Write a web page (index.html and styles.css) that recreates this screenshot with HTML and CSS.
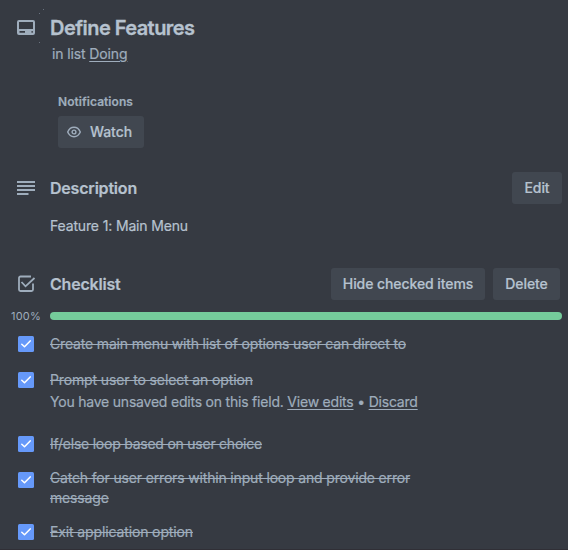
FILE: index.html
```html
<!DOCTYPE html>
<html lang="en">
<head>
<meta charset="utf-8">
<title>Define Features</title>
<link rel="stylesheet" href="styles.css">
</head>
<body>
<main class="card">
  <header class="row card-head">
    <svg class="icon" viewBox="0 0 24 24" fill="currentColor"><path fill-rule="evenodd" d="M5 4h14a2 2 0 0 1 2 2v11a2 2 0 0 1-2 2H5a2 2 0 0 1-2-2V6a2 2 0 0 1 2-2zM5 6v7h14V6zM5.500 15v1.800H11V15zM17.500 15v1.800h1.300V15z"/></svg>
    <h1>Define Features</h1>
  </header>
  <p class="in-list">in list <a>Doing</a></p>
  <section class="notifications">
    <h3>Notifications</h3>
    <button class="btn watch">
      <svg viewBox="0 0 16 16" fill="none" stroke="currentColor" stroke-width="1.400"><path d="M1.700 8C3 4.800 5.300 3.300 8 3.300S13 4.800 14.300 8C13 11.200 10.700 12.700 8 12.700S3 11.200 1.700 8z"/><circle cx="8" cy="8" r="1.900"/></svg>
      <span>Watch</span>
    </button>
  </section>
  <section>
    <div class="row section-head">
      <svg class="icon" viewBox="0 0 24 24" fill="none" stroke="currentColor" stroke-width="1.900"><path d="M3 6h18M3 10h18M3 14h18M3 18h11.500"/></svg>
      <h2>Description</h2>
      <button class="btn edit">Edit</button>
    </div>
    <p class="description">Feature 1: Main Menu</p>
  </section>
  <section>
    <div class="row section-head checklist-head">
      <svg class="icon" viewBox="0 0 24 24" fill="none" stroke="currentColor" stroke-width="1.800"><path d="M17 4.500H6.500a1.500 1.500 0 0 0-1.500 1.500v11.500a1.500 1.500 0 0 0 1.500 1.500H17.500a1.500 1.500 0 0 0 1.500-1.500v-6M7.500 10l4 4.300L20.500 6"/></svg>
      <h2>Checklist</h2>
      <button class="btn hide">Hide checked items</button>
      <button class="btn delete">Delete</button>
    </div>
    <div class="progress"><span class="percent">100%</span><div class="track"></div></div>
    <ul class="items">
      <li><svg class="check" viewBox="0 0 16 16"><path d="M3.800 8.200l2.700 2.600 5.700-5.900"/></svg><s>Create main menu with list of options user can direct to</s></li>
      <li class="edited"><svg class="check" viewBox="0 0 16 16"><path d="M3.800 8.200l2.700 2.600 5.700-5.900"/></svg><div><s class="prompt">Prompt user to select an option</s><p class="unsaved">You have unsaved edits on this field. <a>View edits</a> • <a>Discard</a></p></div></li>
      <li><svg class="check" viewBox="0 0 16 16"><path d="M3.800 8.200l2.700 2.600 5.700-5.900"/></svg><s class="loop">If/else loop based on user choice</s></li>
      <li class="long"><svg class="check" viewBox="0 0 16 16"><path d="M3.800 8.200l2.700 2.600 5.700-5.900"/></svg><s>Catch for user errors within input loop and provide error<br>message</s></li>
      <li><svg class="check" viewBox="0 0 16 16"><path d="M3.800 8.200l2.700 2.600 5.700-5.900"/></svg><s class="prompt">Exit application option</s></li>
    </ul>
  </section>
</main>
</body>
</html>
```
FILE: styles.css
```css
* { box-sizing: border-box; }
body { margin: 0; background: #363a42; color: #9fadbc; font: 14px/20px Inter, "Liberation Sans", sans-serif; overflow: hidden; -webkit-text-stroke: .2px; }
h1, h2, h3, p, ul { margin: 0; padding: 0; }
a { text-decoration: underline; text-underline-offset: 2px; }
.card {
  height: 550px; padding: 16px 6px 0 14px; border-bottom: 1px solid #302f36; overflow: hidden;
  background:
    linear-gradient(#69727f, #69727f) 43px 9px / 1px 1px no-repeat,
    linear-gradient(#69727f, #69727f) 39px 13px / 1px 1px no-repeat,
    linear-gradient(#69727f, #69727f) 39px 42px / 1px 1px no-repeat;
}
.row { display: flex; align-items: center; }
.icon { width: 24px; height: 24px; flex: none; margin-right: 12px; }
h1 { font-size: 20px; line-height: 24px; font-weight: 600; color: #b6c2cf; letter-spacing: -.55px; -webkit-text-stroke: .3px; }
.in-list { margin: 4px 0 0 38px; letter-spacing: -.13px; }
.notifications { margin: 30px 0 0 44px; }
h3 { font-size: 12px; line-height: 16px; font-weight: 600; margin-bottom: 6px; letter-spacing: .05px; }
.btn { height: 32px; border: 0; border-radius: 3px; padding: 0; background: #414750; color: #b6c2cf; font: 500 14px/20px Inter, sans-serif; letter-spacing: -.08px; display: flex; align-items: center; justify-content: center; white-space: nowrap; flex: none; }
.watch { width: 86px; padding-left: 8px; justify-content: flex-start; }
.watch svg { width: 16px; height: 16px; color: #9fadbc; margin-right: 8px; }
.section-head { height: 32px; margin-top: 24px; }
h2 { flex: 1; font-size: 16px; line-height: 20px; font-weight: 600; color: #b6c2cf; letter-spacing: -.2px; }
.edit { width: 50px; }
.description { margin: 12px 0 0 36px; color: #b6c2cf; letter-spacing: -.15px; }
.checklist-head { margin-top: 32px; padding-right: 2px; }
.hide { width: 154px; margin-right: 8px; }
.delete { width: 67px; }
.progress { display: flex; align-items: center; height: 16px; margin-top: 8px; }
.percent { width: 39px; margin-left: -3px; font-size: 11px; line-height: 16px; letter-spacing: .2px; -webkit-text-stroke: 0; }
.track { flex: 1; height: 8px; border-radius: 4px; background: #75cc9b; }
.items { list-style: none; margin-top: 10px; letter-spacing: -.165px; }
.items li { display: flex; min-height: 36px; }
.items .edited { min-height: 64px; }
.items .long { min-height: 52px; }
.long s { margin-top: -2px; }
.prompt { letter-spacing: -.13px; }
.loop { letter-spacing: -.24px; }
.check { width: 16px; height: 16px; flex: none; margin: 2px 16px 0 4px; border-radius: 1.5px; background: #6699fa; fill: none; stroke: #fff; stroke-width: 1.500; stroke-linecap: round; stroke-linejoin: round; }
.unsaved { margin-top: 2px; letter-spacing: -.21px; }
```
